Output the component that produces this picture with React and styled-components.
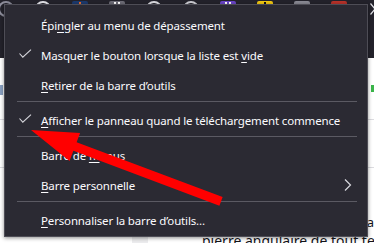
import React from 'react'
import styled, { createGlobalStyle } from 'styled-components'

const GlobalStyle = createGlobalStyle`
  html, body {
    margin: 0;
    padding: 0;
    background: #ffffff;
  }
`

const Page = styled.div`
  position: relative;
  width: 374px;
  height: 243px;
  overflow: hidden;
  display: flex;
  flex-direction: column;
  background: #ffffff;
  font-family: 'Noto Sans', 'Liberation Sans', sans-serif;
`

// browser chrome behind the popup
const Toolbar = styled.div`
  height: 58px;
  flex: 0 0 58px;
  background: #23222b;
  display: flex;
  align-items: flex-start;
  gap: 21px;
  padding: 1px 0 0 0;
  margin-left: -2px;
  box-sizing: border-box;
  position: relative;
`

const ToolIcon = styled.div`
  width: 16px;
  height: 16px;
  flex: 0 0 16px;
  border-radius: ${(p) => (p.$round ? '50%' : '2px')};
  background: ${(p) => p.$bg || 'transparent'};
  border: ${(p) => (p.$ring ? `2px solid ${p.$ring}` : 'none')};
  box-sizing: border-box;
  display: flex;
  justify-content: center;
  gap: 2px;
  padding-top: 1px;
`

const Tick = styled.span`
  width: 2px;
  height: 4px;
  background: ${(p) => p.$c || '#ffffff'};
`

const OverflowChevron = styled.svg`
  position: absolute;
  right: -2px;
  top: 3px;
`

const Content = styled.div`
  flex: 1;
  display: flex;
  flex-direction: column;
  background: #ffffff;
`

const MarkRow = styled.div`
  display: flex;
  justify-content: space-between;
  align-items: flex-start;
  margin-top: 27px;
  height: 34px;
`

const Mark = styled.div`
  width: ${(p) => p.$w}px;
  height: ${(p) => p.$h}px;
  background: ${(p) => p.$bg};
`

const Rule = styled.div`
  height: 1px;
  flex: 0 0 1px;
  background: #dcdce0;
  margin-bottom: ${(p) => p.$after}px;
`

const SideText = styled.div`
  align-self: flex-end;
  font-size: 13px;
  line-height: 16px;
  color: #15141a;
  margin-right: 0;
`

const BottomRow = styled.div`
  display: flex;
  align-items: flex-start;
  margin-top: 6px;
  padding-left: 132px;
`

const GreyBlock = styled.div`
  width: 16px;
  height: 12px;
  flex: 0 0 16px;
  background: #ececee;
  margin-right: 54px;
`

const BottomText = styled.div`
  flex: 0 0 auto;
  font-size: 14px;
  line-height: 14px;
  color: #15141a;
  white-space: nowrap;
  margin-top: -2px;
`

// the context menu
const Menu = styled.div`
  position: absolute;
  left: 4px;
  top: 4px;
  width: 364px;
  box-sizing: border-box;
  background: #2b2a33;
  border: 1px solid #4e4d56;
  padding: 5px 0 1px;
  box-shadow: 0 1px 4px rgba(0, 0, 0, 0.45);
  color: #fbfbfe;
  font-size: 11.5px;
  letter-spacing: -0.15px;
`

const Item = styled.div`
  display: flex;
  align-items: center;
  height: 30px;
  padding-left: 14px;
  padding-right: 15px;
  white-space: nowrap;
`

const CheckSlot = styled.div`
  width: 22px;
  flex: 0 0 22px;
  display: flex;
  align-items: center;
  margin-top: -3px;
`

const Label = styled.span`
  flex: 1;
  u {
    text-decoration: underline;
    text-underline-offset: 2px;
  }
`

const Separator = styled.div`
  height: 1px;
  background: #5b5a63;
  margin: 1px 10px 3px 12px;
`

const Arrow = styled.svg`
  position: absolute;
  left: 0;
  top: 0;
  pointer-events: none;
`

const Check = () => (
  <svg width="13" height="10" viewBox="0 0 13 10">
    <polyline points="0.5,4.5 3.8,8.2 12,0.6" fill="none" stroke="#d4d4da" strokeWidth="1.1" />
  </svg>
)

const MenuItem = ({ checked, submenu, children }) => (
  <Item>
    <CheckSlot>{checked && <Check />}</CheckSlot>
    <Label>{children}</Label>
    {submenu && (
      <svg width="8" height="12" viewBox="0 0 8 12">
        <polyline points="1,0.5 6.5,6 1,11.5" fill="none" stroke="#d8d8de" strokeWidth="1.2" />
      </svg>
    )}
  </Item>
)

const App = () => (
  <>
    <GlobalStyle />
    <Page>
      <Toolbar>
        <ToolIcon $round $ring="#8f8f9d" />
        <ToolIcon $round $ring="#e8e8ee" />
        <ToolIcon $bg="#1d3a6e">
          <Tick $c="#e96a2b" />
        </ToolIcon>
        <ToolIcon $bg="#6e6d78">
          <Tick />
          <Tick />
        </ToolIcon>
        <ToolIcon $round $ring="#e0e0e6" />
        <ToolIcon $round $ring="#d0d0d6" />
        <ToolIcon $bg="#6b45c9">
          <Tick />
          <Tick />
        </ToolIcon>
        <ToolIcon $bg="#f2c811">
          <Tick $c="#111111" />
        </ToolIcon>
        <ToolIcon $bg="#8a8a94" />
        <ToolIcon $bg="#b8322a" />
        <OverflowChevron width="6" height="12" viewBox="0 0 6 12">
          <polyline points="0.5,0.5 5,6 0.5,11.5" fill="none" stroke="#e0e0e6" strokeWidth="1.2" />
        </OverflowChevron>
      </Toolbar>
      <Content>
        <MarkRow>
          <Mark $w={3} $h={10} $bg="#8aa0c0" />
          <Mark $w={3} $h={7} $bg="#3ab54a" />
        </MarkRow>
        <Rule $after={47} />
        <Rule $after={46} />
        <SideText>a</SideText>
        <BottomRow>
          <GreyBlock />
          <BottomText>pierre angulaire de tout tech</BottomText>
        </BottomRow>
      </Content>

      <Menu>
        <MenuItem>Épi<u>n</u>gler au menu de dépassement</MenuItem>
        <MenuItem checked>Masquer le bouton lorsque la liste est <u>v</u>ide</MenuItem>
        <MenuItem><u>R</u>etirer de la barre d’outils</MenuItem>
        <Separator />
        <MenuItem checked><u>A</u>fficher le panneau quand le téléchargement commence</MenuItem>
        <Separator />
        <MenuItem>Barre de <u>m</u>enus</MenuItem>
        <MenuItem submenu><u>B</u>arre personnelle</MenuItem>
        <Separator />
        <MenuItem><u>P</u>ersonnaliser la barre d’outils…</MenuItem>
      </Menu>

      <Arrow width="374" height="243" viewBox="0 0 374 243">
        <g transform="translate(31 130) rotate(20.6)">
          <polygon points="0,0 47,-14.5 47,-4.6 203,-4.6 203,4.6 47,4.6 47,15.5" fill="#ff0000" />
        </g>
      </Arrow>
    </Page>
  </>
)

export default App
